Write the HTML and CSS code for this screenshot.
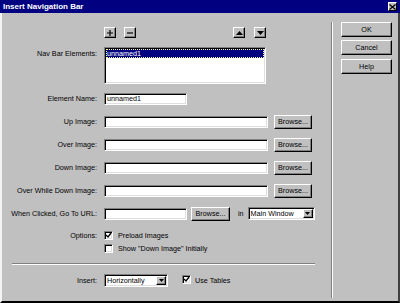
FILE: index.html
```html
<!DOCTYPE html>
<html lang="en">
<head>
<meta charset="UTF-8">
<title>Insert Navigation Bar</title>
<link rel="stylesheet" href="styles.css">
</head>
<body>

<div class="window">
  <div class="titlebar">
    <span class="title">Insert Navigation Bar</span>
    <span class="close"><svg width="7" height="6" viewBox="0 0 7 6"><path d="M0.5 0.5 L6.5 5.5 M6.5 0.5 L0.5 5.5" stroke="#000" stroke-width="1.3"/></svg></span>
  </div>

  <div class="body">
    <div class="form">
      <div class="tools">
        <div class="grp">
          <span class="tbtn"><svg width="6" height="6" viewBox="0 0 6 6"><path d="M3 0 V6 M0 3 H6" stroke="#000" stroke-width="1.2"/></svg></span>
          <span class="tbtn"><svg width="6" height="6" viewBox="0 0 6 6"><path d="M0 3 H6" stroke="#000" stroke-width="1.2"/></svg></span>
        </div>
        <div class="grp grp-right">
          <span class="tbtn"><svg width="7" height="4" viewBox="0 0 7 4"><polygon points="3.5,0 7,4 0,4" fill="#000"/></svg></span>
          <span class="tbtn"><svg width="7" height="4" viewBox="0 0 7 4"><polygon points="0,0 7,0 3.5,4" fill="#000"/></svg></span>
        </div>
      </div>

      <div class="listrow">
        <span class="label list-label">Nav Bar Elements:</span>
        <div class="list"><div class="sel">unnamed1</div></div>
      </div>

      <div class="row">
        <span class="label">Element Name:</span>
        <span class="field w-short">unnamed1</span>
      </div>
      <div class="row">
        <span class="label">Up Image:</span>
        <span class="field w-long"></span>
        <span class="btn">Browse...</span>
      </div>
      <div class="row">
        <span class="label">Over Image:</span>
        <span class="field w-long"></span>
        <span class="btn">Browse...</span>
      </div>
      <div class="row">
        <span class="label">Down Image:</span>
        <span class="field w-long"></span>
        <span class="btn">Browse...</span>
      </div>
      <div class="row">
        <span class="label">Over While Down Image:</span>
        <span class="field w-long"></span>
        <span class="btn">Browse...</span>
      </div>
      <div class="row">
        <span class="label">When Clicked, Go To URL:</span>
        <span class="field w-short"></span>
        <span class="btn btn-url">Browse...</span>
        <span class="in">in</span>
        <span class="select sel-window"><span class="sel-text">Main Window</span><span class="drop"><svg width="5" height="3" viewBox="0 0 5 3"><polygon points="0,0 5,0 2.5,3" fill="#000"/></svg></span></span>
      </div>

      <div class="optrow first">
        <span class="label">Options:</span>
        <span class="check"><svg width="7" height="7" viewBox="0 0 7 7"><path d="M1 3 L3 5 L6 1" fill="none" stroke="#000" stroke-width="1.3"/></svg></span>
        <span>Preload Images</span>
      </div>
      <div class="optrow">
        <span class="label"></span>
        <span class="check"></span>
        <span>Show "Down Image" Initially</span>
      </div>

      <div class="sep"></div>

      <div class="optrow insert">
        <span class="label">Insert:</span>
        <span class="select sel-insert"><span class="sel-text">Horizontally</span><span class="drop"><svg width="5" height="3" viewBox="0 0 5 3"><polygon points="0,0 5,0 2.5,3" fill="#000"/></svg></span></span>
        <span class="check check-tables"><svg width="7" height="7" viewBox="0 0 7 7"><path d="M1 3 L3 5 L6 1" fill="none" stroke="#000" stroke-width="1.3"/></svg></span>
        <span>Use Tables</span>
      </div>
    </div>

    <div class="side">
      <span class="btn dbtn">OK</span>
      <span class="btn dbtn">Cancel</span>
      <span class="btn dbtn help">Help</span>
    </div>
  </div>
</div>

</body>
</html>
```

FILE: styles.css
```css
body {
  margin: 0;
  font-family: "Liberation Sans", Arial, sans-serif;
  font-size: 7.2px;
  color: #000;
  background: #c0c0c0;
}

.window {
  width: 400px;
  height: 303px;
  display: flex;
  flex-direction: column;
  background: #c0c0c0;
}

/* title bar */
.titlebar {
  height: 13px;
  flex: none;
  background: #000080;
  color: #fff;
  font-size: 8px;
  font-weight: bold;
  display: flex;
  align-items: center;
  justify-content: space-between;
  padding: 0 3px 0 3px;
}

.close {
  width: 9px;
  height: 9px;
  box-sizing: border-box;
  background: #c0c0c0;
  border: 1px solid;
  border-color: #fff #000 #000 #fff;
  display: flex;
  align-items: center;
  justify-content: center;
}

.body {
  flex: 1;
  display: flex;
  border-left: 2px solid #f4f4f4;
  border-right: 2px solid #404040;
  border-bottom: 2px solid #000;
}

/* left form */
.form {
  width: 329px;
  flex: none;
  padding-top: 14px;
  box-sizing: border-box;
}

.tools {
  display: flex;
  justify-content: space-between;
  margin-left: 102px;
  width: 162px;
  height: 11px;
}

.grp { display: flex; gap: 8px; }
.grp-right { gap: 9px; }

.tbtn, .btn, .drop {
  box-sizing: border-box;
  background: #c0c0c0;
  border: 1px solid;
  border-color: #fff #000 #000 #fff;
  box-shadow: inset -1px -1px #808080;
  display: flex;
  align-items: center;
  justify-content: center;
}

.tbtn { width: 12px; height: 11px; }

.label {
  width: 95px;
  flex: none;
  margin-right: 7px;
  text-align: right;
}

.listrow {
  display: flex;
  align-items: flex-start;
  margin-top: 9px;
  margin-bottom: 3px;
}

.list-label { padding-top: 2px; line-height: 9px; }

.field, .list, .select, .check {
  box-sizing: border-box;
  background: #fff;
  border: 1px solid;
  border-color: #808080 #fff #fff #808080;
  box-shadow: inset 1px 1px #000, inset -1px -1px #dfdfdf;
}

.list {
  width: 162px;
  height: 37px;
  padding: 1px;
}

.list .sel {
  background: #000080;
  color: #fff;
  height: 9px;
  line-height: 9px;
  padding-left: 1px;
  outline: 1px dotted #ffff90;
  outline-offset: -1px;
}

.row {
  display: flex;
  align-items: center;
  height: 23px;
}

.field {
  height: 12px;
  line-height: 10px;
  padding-left: 2px;
}

.w-short { width: 83px; }
.w-long { width: 164px; }

.btn {
  width: 38px;
  height: 14px;
  margin-left: 6px;
}

.btn-url { width: 39px; margin-left: 4px; }
.in { margin-left: 8px; }

.select {
  display: flex;
  align-items: center;
  height: 13px;
  padding: 1px 1px 1px 2px;
}

.sel-text { flex: 1; }
.sel-window { width: 67px; margin-left: 4px; }
.sel-insert { width: 64px; }

.drop { width: 10px; height: 100%; }

.optrow {
  display: flex;
  align-items: center;
  height: 13px;
}

.optrow.first { margin-top: 4px; }
.optrow.insert { margin-top: 9px; }

.check {
  width: 9px;
  height: 9px;
  margin-right: 5px;
  display: flex;
  align-items: center;
  justify-content: center;
}

.check-tables { margin-left: 14px; margin-top: -3px; margin-right: 4px; }

.sep {
  margin: 8px 0 0 10px;
  width: 303px;
  border-top: 1px solid #808080;
  border-bottom: 1px solid #fff;
}

/* right buttons */
.side {
  flex: 1;
  margin: 9px 0 3px;
  border-left: 1px solid #808080;
  box-shadow: inset 1px 0 #fff;
  padding-left: 9px;
  display: flex;
  flex-direction: column;
  gap: 3px;
}

.dbtn {
  width: 51px;
  height: 15px;
  margin-left: 0;
}

.help { margin-top: 1px; }
```
